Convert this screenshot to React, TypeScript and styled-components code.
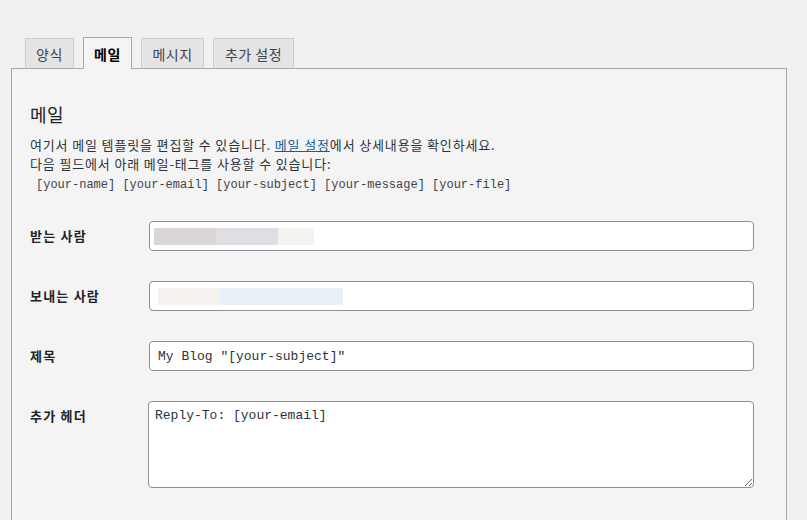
import styled, { createGlobalStyle } from 'styled-components'

const GlobalStyle = createGlobalStyle`
  html, body {
    margin: 0;
    padding: 0;
    background: #f1f1f1;
  }
  body {
    font-family: 'Noto Sans CJK KR', 'Noto Sans', sans-serif;
    font-size: 13px;
    color: #1d2327;
  }
`

const Page = styled.div`
  padding: 37px 20px 0 11px;
  height: 520px;
  box-sizing: border-box;
  overflow: hidden;
`

// 탭 목록
const TabList = styled.ul`
  display: flex;
  gap: 9px;
  list-style: none;
  margin: 0 0 -1px 0;
  padding: 0 0 0 14px;
  position: relative;
  z-index: 1;
`

const Tab = styled.li<{ $active?: boolean; $width: number }>`
  box-sizing: border-box;
  width: ${({ $width }) => $width}px;
  height: ${({ $active }) => ($active ? 32 : 31)}px;
  display: flex;
  align-items: center;
  justify-content: center;
  font-size: 14px;
  line-height: 1;
  letter-spacing: 0.5px;
  font-weight: ${({ $active }) => ($active ? 700 : 400)};
  color: ${({ $active }) => ($active ? '#000' : '#3c434a')};
  background: ${({ $active }) => ($active ? '#f4f4f4' : '#e4e4e4')};
  border: 1px solid ${({ $active }) => ($active ? '#a7aaad' : '#cdcdcd')};
  border-bottom: ${({ $active }) => ($active ? 'none' : '1px solid #a7aaad')};
  align-self: flex-end;
`

// 패널
const Panel = styled.div`
  background: #f4f4f4;
  border: 1px solid #a7aaad;
  padding: 33px 18px 40px 18px;
  min-height: 500px;
`

const Heading = styled.h2`
  margin: 0 0 8px 0;
  font-size: 18px;
  font-weight: 400;
  line-height: 25px;
  letter-spacing: 0.5px;
  color: #1d2327;
`

const Desc = styled.p`
  margin: 0;
  font-size: 13px;
  line-height: 19px;
  letter-spacing: 0.85px;
  color: #2c3338;
`

const Link = styled.a`
  color: #135e96;
  text-decoration: underline;
`

const TagLine = styled.p`
  margin: 2px 0 0 0;
  padding-left: 6px;
  font-family: 'Liberation Mono', 'DejaVu Sans Mono', monospace;
  font-size: 12px;
  line-height: 20px;
  color: #3c434a;
`

const Form = styled.div`
  display: grid;
  grid-template-columns: 119px 605px;
  margin-top: 11px;
`

const Label = styled.div`
  padding: 15px 0 0 0;
  height: 30px;
  line-height: 30px;
  font-weight: 700;
  font-size: 13px;
  letter-spacing: 1.2px;
`

const Cell = styled.div`
  padding: 15px 0;
`

const Shell = styled.div<{ $pad: number }>`
  box-sizing: border-box;
  height: 30px;
  border: 1px solid #8c8f94;
  border-radius: 4px;
  background: #fff;
  display: flex;
  align-items: center;
  padding-left: ${({ $pad }) => $pad}px;
`

const Blot = styled.span<{ $w: number; $c: string }>`
  display: block;
  width: ${({ $w }) => $w}px;
  height: 17px;
  background: ${({ $c }) => $c};
`

const TextInput = styled.input`
  box-sizing: border-box;
  width: 100%;
  height: 30px;
  border: 1px solid #8c8f94;
  border-radius: 4px;
  background: #fff;
  padding: 0 8px;
  font-family: 'Liberation Mono', 'DejaVu Sans Mono', monospace;
  font-size: 13px;
  color: #2c3338;
  outline: none;
`

const TextArea = styled.textarea`
  box-sizing: border-box;
  display: block;
  width: 606px;
  height: 87px;
  margin-left: -1px;
  border: 1px solid #8c8f94;
  border-radius: 4px;
  background: #fff;
  padding: 5px 6px;
  font-family: 'Liberation Mono', 'DejaVu Sans Mono', monospace;
  font-size: 13px;
  line-height: 18px;
  color: #2c3338;
  resize: vertical;
  outline: none;
`

const tabs = [
  { label: '양식', width: 49 },
  { label: '메일', width: 49, active: true },
  { label: '메시지', width: 63 },
  { label: '추가 설정', width: 81 },
]

const tags = ['[your-name]', '[your-email]', '[your-subject]', '[your-message]', '[your-file]']

export default function App() {
  return (
    <>
      <GlobalStyle />
      <Page>
        <TabList>
          {tabs.map((t) => (
            <Tab key={t.label} $active={t.active} $width={t.width}>
              {t.label}
            </Tab>
          ))}
        </TabList>
        <Panel>
          <Heading>메일</Heading>
          <Desc>
            여기서 메일 템플릿을 편집할 수 있습니다. <Link href="#">메일 설정</Link>에서 상세내용을 확인하세요.
          </Desc>
          <Desc>다음 필드에서 아래 메일-태그를 사용할 수 있습니다:</Desc>
          <TagLine>{tags.join(' ')}</TagLine>

          <Form>
            <Label>받는 사람</Label>
            <Cell>
              <Shell $pad={4}>
                <Blot $w={62} $c="#dad6d7" />
                <Blot $w={62} $c="#e1dee3" />
                <Blot $w={36} $c="#f5f3f0" />
              </Shell>
            </Cell>

            <Label>보내는 사람</Label>
            <Cell>
              <Shell $pad={8}>
                <Blot $w={62} $c="#f5f1ee" />
                <Blot $w={123} $c="#e8eff7" />
              </Shell>
            </Cell>

            <Label>제목</Label>
            <Cell>
              <TextInput readOnly value='My Blog "[your-subject]"' />
            </Cell>

            <Label>추가 헤더</Label>
            <Cell>
              <TextArea readOnly value="Reply-To: [your-email]" />
            </Cell>
          </Form>
        </Panel>
      </Page>
    </>
  )
}
